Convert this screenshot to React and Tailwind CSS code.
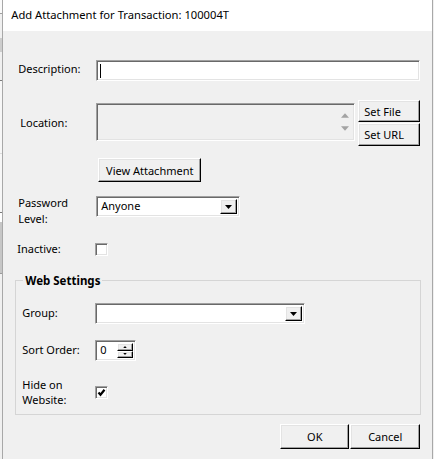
import React from 'react';

const sunken = 'border border-[#a0a0a0] border-r-white border-b-white shadow-[inset_1px_1px_0_#696969,inset_-1px_-1px_0_#e3e3e3]';
const raised = 'border border-white border-r-black border-b-black shadow-[inset_-1px_-1px_0_#a0a0a0,inset_1px_1px_0_#e3e3e3] bg-[#f0f0f0]';

function Button({ className = '', children }) {
  return (
    <button type="button" className={`${raised} flex items-center justify-center text-[11px] leading-none text-black ${className}`}>
      {children}
    </button>
  );
}

function DownArrow({ className = 'h-[4px] w-[7px]', fill = '#000' }) {
  return (
    <svg viewBox="0 0 7 4" className={className}>
      <polygon points="0,0 7,0 3.5,4" fill={fill} />
    </svg>
  );
}

function UpArrow({ className = 'h-[4px] w-[7px]', fill = '#000' }) {
  return (
    <svg viewBox="0 0 7 4" className={className}>
      <polygon points="0,4 7,4 3.5,0" fill={fill} />
    </svg>
  );
}

function Combo({ value, className }) {
  return (
    <div className={`${sunken} flex h-[21px] items-stretch bg-white ${className}`}>
      <span className="flex flex-1 items-center pl-[4px] text-[11px]">{value}</span>
      <span className={`${raised} m-[2px] flex w-[17px] items-center justify-center`}>
        <DownArrow />
      </span>
    </div>
  );
}

function Check({ checked, className = '' }) {
  return (
    <span className={`${sunken} flex h-[13px] w-[13px] items-center justify-center bg-white ${className}`}>
      {checked && (
        <svg viewBox="0 0 9 9" className="h-[9px] w-[9px]">
          <polyline points="1.5,4.5 3.5,6.8 7.5,1.8" fill="none" stroke="#000" strokeWidth="2.2" />
        </svg>
      )}
    </span>
  );
}

function LeftStrip() {
  return (
    <div className="flex w-[3px] flex-col">
      <div className="h-[13px] bg-[#fafafa]" />
      <div className="h-[1px] bg-[#a0a0a0]" />
      <div className="h-[24px] bg-[#f0f0f0]" />
      <div className="h-[14px] bg-[#cdcdcd]" />
      <div className="h-[28px] bg-[#f0f0f0]" />
      <div className="h-[1px] bg-[#7a7a7a]" />
      <div className="h-[72px] bg-[#f7f7f7]" />
      <div className="h-[1px] bg-[#dcdcdc]" />
      <div className="h-[58px] bg-[#f7f7f7]" />
      <div className="h-[1px] bg-[#7a7a7a]" />
      <div className="h-[9px] bg-white" />
      <div className="h-[51px] bg-[#c6c6c6]" />
      <div className="h-[1px] bg-[#9a9a9a]" />
      <div className="flex-1 bg-[#f0f0f0]" />
    </div>
  );
}

export default function App() {
  return (
    <div className="flex h-[459px] w-[434px] overflow-hidden bg-[#f0f0f0] font-['Noto_Sans',sans-serif] text-[11px] text-black">
      <LeftStrip />
      <div className="flex flex-1 flex-col border-x border-[#a8a8a8] bg-[#f0f0f0]">
        <div className="flex h-[31px] items-center bg-white pl-[8px] text-[11.2px]">
          Add Attachment for Transaction: 100004T
        </div>

        <div className="flex flex-col pl-[15px] pr-[12px]">
          {/* Description */}
          <div className="mt-[29px] flex h-[21px] items-center">
            <span className="w-[78px] -translate-y-[1px]">Description:</span>
            <div className={`${sunken} flex h-[21px] flex-1 items-center bg-white`}>
              <span className="ml-[3px] h-[14px] w-[1px] bg-black" />
            </div>
          </div>

          {/* Location */}
          <div className="mt-[19px] flex h-[46px] items-start">
            <span className="ml-[2px] w-[76px] self-center">Location:</span>
            <div className={`${sunken} mt-[3px] flex h-[38px] w-[259px] justify-end bg-[#f0f0f0]`}>
              <div className="mr-[4px] flex w-[10px] flex-col items-center justify-between py-[9px]">
                <UpArrow fill="#a3a3a3" className="h-[5px] w-[8px]" />
                <DownArrow fill="#a3a3a3" className="h-[5px] w-[8px]" />
              </div>
            </div>
            <div className="ml-[3px] flex flex-col gap-[1px]">
              <Button className="h-[22px] w-[62px] justify-start pl-[5px]">Set File</Button>
              <Button className="h-[23px] w-[62px] justify-start pl-[5px]">Set URL</Button>
            </div>
          </div>

          {/* View Attachment */}
          <div className="mt-[12px] flex">
            <Button className="ml-[80px] h-[24px] w-[103px]">View Attachment</Button>
          </div>

          {/* Password Level */}
          <div className="mt-[13px] flex h-[32px] items-start">
            <span className="w-[78px] leading-[16px]">
              Password
              <br />
              Level:
            </span>
            <Combo value="Anyone" className="mt-[1px] w-[144px]" />
          </div>

          {/* Inactive */}
          <div className="mt-[15px] flex h-[14px] items-center">
            <span className="-ml-[1px] w-[78px]">Inactive:</span>
            <Check />
          </div>
        </div>

        {/* Web Settings */}
        <fieldset className="ml-[12px] mr-[11px] mt-[17px] border border-[#d5d5d5] pb-[7px]">
          <legend className="ml-[7px] px-[2px] text-[11.5px] font-bold leading-[15px]">Web Settings</legend>
          <div className="flex flex-col pl-[6px]">
            <div className="mt-[15px] flex h-[21px] items-center">
              <span className="w-[73px]">Group:</span>
              <Combo value="" className="w-[210px]" />
            </div>

            <div className="mt-[16px] flex h-[21px] items-center">
              <span className="w-[73px]">Sort Order:</span>
              <div className={`${sunken} flex h-[21px] w-[41px] items-stretch bg-white`}>
                <span className="flex flex-1 items-center pl-[4px]">0</span>
                <span className="my-[2px] mr-[2px] flex w-[16px] flex-col">
                  <span className={`${raised} flex flex-1 items-center justify-center`}>
                    <UpArrow className="h-[2px] w-[4px]" />
                  </span>
                  <span className={`${raised} flex flex-1 items-center justify-center`}>
                    <DownArrow className="h-[2px] w-[4px]" />
                  </span>
                </span>
              </div>
            </div>

            <div className="mt-[16px] flex h-[30px] items-start">
              <span className="w-[73px] leading-[15px]">
                Hide on
                <br />
                Website:
              </span>
              <Check checked className="mt-[9px]" />
            </div>
          </div>
        </fieldset>

        {/* Buttons */}
        <div className="mt-[9px] flex justify-end gap-[1px] pr-[12px]">
          <Button className="h-[25px] w-[69px]">OK</Button>
          <Button className="h-[25px] w-[70px]">Cancel</Button>
        </div>
      </div>
      <div className="w-[1px] bg-[#f0f0f0]" />
    </div>
  );
}
